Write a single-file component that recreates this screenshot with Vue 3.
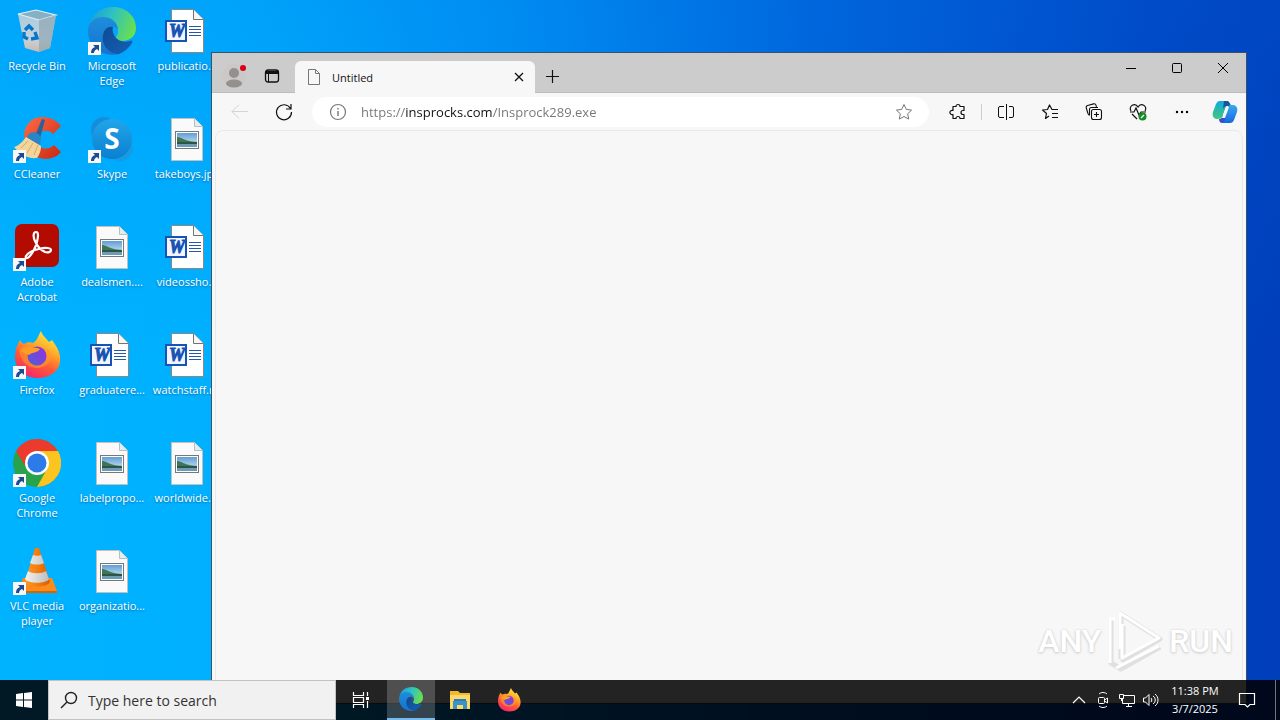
<script setup>
import { ref } from 'vue'

const word = { icon: 'word', glyph: 'W', glyphClass: 'glyph-word', gx: 14, gy: 30 }

const shortcuts = [
  { name: 'Recycle Bin', icon: 'bin' },
  { name: 'CCleaner', icon: 'ccleaner', link: true },
  { name: 'Adobe Acrobat', icon: 'acrobat', link: true },
  { name: 'Firefox', icon: 'firefox', link: true },
  { name: 'Google Chrome', icon: 'chrome', link: true },
  { name: 'VLC media player', icon: 'vlc', link: true },
  { name: 'Microsoft Edge', icon: 'edge', link: true },
  { name: 'Skype', icon: 'skype', link: true, glyph: 'S', glyphClass: 'glyph-skype', gx: 24, gy: 34 },
  { name: 'dealsmen....', icon: 'image' },
  { name: 'graduatere...', ...word },
  { name: 'labelpropo...', icon: 'image' },
  { name: 'organizatio...', icon: 'image' },
  { name: 'publicatio...', ...word },
  { name: 'takeboys.jpg', icon: 'image' },
  { name: 'videossho...', ...word },
  { name: 'watchstaff.rtf', ...word },
  { name: 'worldwide....', icon: 'image' }
]

const address = ref('https://insprocks.com/Insprock289.exe')
const query = ref('')
</script>

<template>
  <div class="screen">
    <svg class="sprites" aria-hidden="true">
      <defs>
        <linearGradient id="binFace" x1="0" y1="0" x2="0" y2="1">
          <stop offset="0" stop-color="#a5cbe0" /><stop offset=".7" stop-color="#c6d2da" /><stop offset="1" stop-color="#cdb9ac" />
        </linearGradient>
        <linearGradient id="edgeTop" x1="0" y1=".3" x2="1" y2=".6">
          <stop offset="0" stop-color="#1b9fd8" /><stop offset=".45" stop-color="#2fc3c0" /><stop offset="1" stop-color="#6be04a" />
        </linearGradient>
        <linearGradient id="edgeMid" x1="0" y1="0" x2="0" y2="1">
          <stop offset="0" stop-color="#1f8ddb" /><stop offset="1" stop-color="#1473cf" />
        </linearGradient>
        <linearGradient id="edgeLow" x1="0" y1="0" x2="1" y2="1">
          <stop offset="0" stop-color="#0f4a94" /><stop offset="1" stop-color="#1560b5" />
        </linearGradient>
        <linearGradient id="fire" x1=".8" y1="0" x2=".3" y2="1">
          <stop offset="0" stop-color="#fff14a" /><stop offset=".35" stop-color="#ffae28" /><stop offset=".65" stop-color="#ff5a36" /><stop offset="1" stop-color="#f5256c" />
        </linearGradient>
        <linearGradient id="globe" x1="0" y1="1" x2="1" y2="0">
          <stop offset="0" stop-color="#4a62d8" /><stop offset="1" stop-color="#9c2ce0" />
        </linearGradient>
        <linearGradient id="skypeBlue" x1="0" y1="0" x2="0" y2="1">
          <stop offset="0" stop-color="#20a6ea" /><stop offset="1" stop-color="#0b7fd0" />
        </linearGradient>
        <linearGradient id="cone" x1="0" y1="0" x2="1" y2="0">
          <stop offset="0" stop-color="#ff9a2a" /><stop offset=".5" stop-color="#f57c0c" /><stop offset="1" stop-color="#d95c00" />
        </linearGradient>
        <linearGradient id="stripe" x1="0" y1="0" x2="1" y2="0">
          <stop offset="0" stop-color="#f2f2f2" /><stop offset="1" stop-color="#bdbdbd" />
        </linearGradient>
        <linearGradient id="ccRed" x1="0" y1="0" x2="1" y2="1">
          <stop offset="0" stop-color="#ff6a45" /><stop offset="1" stop-color="#c92812" />
        </linearGradient>
        <linearGradient id="sky" x1="0" y1="0" x2="0" y2="1">
          <stop offset="0" stop-color="#5f9ed6" /><stop offset="1" stop-color="#e3f0f6" />
        </linearGradient>
        <linearGradient id="pilotA" x1="0" y1="0" x2="0" y2="1">
          <stop offset="0" stop-color="#12a9df" /><stop offset="1" stop-color="#43c878" />
        </linearGradient>
        <linearGradient id="pilotB" x1="0" y1="0" x2="0" y2="1">
          <stop offset="0" stop-color="#3aa8f2" /><stop offset="1" stop-color="#1668dd" />
        </linearGradient>
      </defs>

      <symbol id="bin" viewBox="0 0 48 48">
        <path d="M5 7 23 3l20 5-6 33-11 4-14-4z" fill="url(#binFace)" />
        <path d="m5 7 21 6 17-5-20-5z" fill="#86b0c6" stroke="#e4eff4" stroke-width="1.200" />
        <path d="m26 13 17-5-6 33-11 4z" fill="#8ea6b4" opacity=".7" />
        <g fill="none" stroke="#0877c9" stroke-width="3.400">
          <path d="m12 23 4-4 4 4" /><path d="m22 25 2 6-6 1" /><path d="m15 32-4-2 0-5" />
        </g>
      </symbol>

      <symbol id="edge" viewBox="0 0 48 48">
        <path d="M1 20C3 7 13 0 25 0c14 0 23 10 23 21 0 8-6 13-14 13-5 0-7-2-6-4 3-3 3-9-2-13C17 10 5 13 1 20z" fill="url(#edgeTop)" />
        <path d="M0 24c0-9 7-14 15-14 9 0 15 6 15 13-3-6-14-4-15 5-1 10 8 19 17 19C14 51 0 39 0 24z" fill="url(#edgeMid)" />
        <path d="M15 28c1-6 5-9 10-8-2 9 6 17 17 14 2-1 3 0 2 2-3 5-8 9-13 11-10 0-18-9-16-19z" fill="url(#edgeLow)" />
      </symbol>

      <symbol id="ccleaner" viewBox="0 0 48 48">
        <path d="m48 11-8 8c-5-6-15-3-16 5-1 9 10 13 17 6l7 7c-8 10-26 9-33-3C4 13 19-2 36 3c5 1 9 4 12 8z" fill="url(#ccRed)" />
        <path d="m29 4 3 1-5 18-5-2z" fill="#24649b" />
        <path d="M17 18c4-2 8 0 11 4l-1 8-14-7z" fill="#2a84c8" />
        <path d="m13 22 15 9c0 4-1 8-4 12C14 44 7 39 1 32c6-2 9-6 12-10z" fill="#f3d59c" />
        <path d="m15 26-7 7m12-5-6 10m11-8-4 10" stroke="#d2a968" fill="none" />
      </symbol>

      <symbol id="skype" viewBox="0 0 48 48">
        <circle cx="16" cy="15" r="13" fill="#158ddb" /><circle cx="32" cy="33" r="13" fill="#149ce5" />
        <circle cx="24" cy="24" r="20" fill="url(#skypeBlue)" />
      </symbol>

      <symbol id="acrobat" viewBox="0 0 48 48">
        <rect x="2" y="1" width="44" height="43" rx="7" fill="#b30b00" />
        <path d="M23 9c-3 0-3 5-1 9 2 5 6 9 10 11 3 1 6 0 6-2s-5-3-12-1c-6 1-11 4-13 7-1 2 1 3 3 1 3-3 7-10 8-15 1-5 2-10-1-10z" fill="none" stroke="#fff" stroke-width="2.200" stroke-linejoin="round" />
      </symbol>

      <symbol id="firefox" viewBox="0 0 48 48">
        <path d="M7 9c1 2 2 3 4 4 3-2 6-2 9-1 4-2 5-7 8-12 1 4 5 7 8 11l3-2c6 8 9 14 8 22-1 9-10 16-22 16C11 47 2 38 2 26c0-7 2-12 5-17z" fill="url(#fire)" />
        <path d="M6 19c5-5 13-4 18-2-1 4-8 4-9 7 0 5 8 5 13 4 7-1 7-8 4-12 10 6 7 20-7 21C14 37 8 31 6 19z" fill="#ff9b27" opacity=".6" />
        <circle cx="24" cy="25" r="9.500" fill="url(#globe)" />
        <path d="M8 20c5-5 14-4 19-2-2 4-8 3-11 6-3-1-6-3-8-4z" fill="#ff9e22" />
      </symbol>

      <symbol id="chrome" viewBox="0 0 48 48">
        <circle cx="24" cy="24" r="24" fill="#28a34b" />
        <path d="M24 0a24 24 0 0 0-21 12l11 18 10-17h21A24 24 0 0 0 24 0z" fill="#ec3a2e" />
        <path d="M24 12h21A24 24 0 0 1 24 48l10-18z" fill="#fcc41f" />
        <circle cx="24" cy="24" r="12" fill="#fff" /><circle cx="24" cy="24" r="9.500" fill="#2c7be8" />
      </symbol>

      <symbol id="vlc" viewBox="0 0 48 48">
        <path d="M10 31h29l5 13H5z" fill="#f98c1c" /><path d="M5 44h39v2H5z" fill="#d86300" />
        <path d="M22 1h4l11 34c-3 6-22 6-25 0z" fill="url(#cone)" />
        <path d="M20 8c2 1 6 1 8 0l3 8c-3 2-10 2-14 0zM15 24c4 3 14 3 18 0l3 8c-3 5-21 5-24 0z" fill="url(#stripe)" />
      </symbol>

      <symbol id="word" viewBox="0 0 48 48">
        <path d="M8.500 2.500h22l10 10v33h-32z" fill="#fff" stroke="#8b8884" />
        <path d="M30.500 2.500v10h10" fill="#f7f7f7" stroke="#77726e" />
        <path d="M26 19.500h12m-12 3h12m-12 3h12m-12 3h12" stroke="#2459a8" />
        <rect x="3" y="14" width="20" height="20" fill="#f1f5ff" stroke="#1753b2" stroke-width="2" />
      </symbol>

      <symbol id="image" viewBox="0 0 48 48">
        <path d="M8.500 3.500h23l8 8v34h-31z" fill="#fafafa" stroke="#c5c0bb" />
        <path d="M31.500 3.500v8h8" fill="#e2edf1" stroke="#b5bec2" />
        <rect x="12.500" y="16.500" width="23" height="17" fill="#fff" stroke="#777" />
        <path d="M14 18h20v14H14z" fill="url(#sky)" />
        <path d="M14 22c5 0 6 4 20 5v2H14z" fill="#3f7454" /><path d="M14 29h20v3H14z" fill="#6d9cb8" /><path d="M14 27h20v2H14z" fill="#2b5545" />
      </symbol>

      <symbol id="arrow" viewBox="0 0 13 13">
        <path d="M0 0h13v13H0z" fill="#f8f8f8" /><path d="M5 3h6v6L9 7c-2 1-3 2-3 4H3c0-3 1-5 4-6z" fill="#1c4b94" />
      </symbol>

      <symbol id="explorer" viewBox="0 0 24 24">
        <path d="M2 3h8l2 2h10v16H2z" fill="#f4b92e" /><path d="M2 7h20v14H2z" fill="#ffd968" />
        <path d="M5 13h14v8h-4v-4H9v4H5z" fill="#3d91c9" /><path d="M6 11h12v2H6z" fill="#277fb7" />
      </symbol>
    </svg>

    <nav class="desktop" aria-label="Desktop">
      <button v-for="item in shortcuts" :key="item.name" class="shortcut" type="button">
        <span class="picture">
          <svg class="big" viewBox="0 0 48 48" aria-hidden="true">
            <use :href="'#' + item.icon" />
            <text v-if="item.glyph" :class="item.glyphClass" :x="item.gx" :y="item.gy" text-anchor="middle">{{ item.glyph }}</text>
          </svg>
          <svg v-if="item.link" class="arrow" aria-hidden="true"><use href="#arrow" /></svg>
        </span>
        <span class="caption">{{ item.name }}</span>
      </button>
    </nav>

    <main class="window">
      <header class="tabs">
        <button class="profile" type="button" aria-label="Profile">
          <svg width="24" height="24" viewBox="0 0 24 24"><circle cx="12" cy="12" r="12" fill="#cac9c8" /><circle cx="12" cy="9" r="5" fill="#93908e" /><ellipse cx="12" cy="19.500" rx="8" ry="4" fill="#93908e" /></svg>
          <span class="dot"></span>
        </button>
        <button class="tabmenu" type="button" aria-label="Tab actions">
          <svg width="16" height="16" viewBox="0 0 16 16"><rect x="1.500" y="2" width="13" height="12" rx="2.500" fill="none" stroke="#111" stroke-width="1.300" /><path d="M2 3h12v3H2z" fill="#111" /><path d="M4.500 5v9" stroke="#111" /></svg>
        </button>
        <div class="tab">
          <svg width="16" height="18" viewBox="0 0 16 18" fill="none" stroke="#777"><path d="M2.500 1.500h7l4 4v11h-11zM9.500 1.500v4h4" /></svg>
          <span class="title">Untitled</span>
          <button type="button" class="shut" aria-label="Close tab"><svg width="10" height="10" viewBox="0 0 10 10"><path d="m1 1 8 8m0-8-8 8" stroke="#111" stroke-width="1.300" /></svg></button>
        </div>
        <button class="add" type="button" aria-label="New tab"><svg width="16" height="16" viewBox="0 0 16 16"><path d="M8.500 2v13M2 8.500h13" stroke="#111" stroke-width="1.200" /></svg></button>
        <div class="controls">
          <button type="button" aria-label="Minimize"><svg width="12" height="12" viewBox="0 0 12 12"><path d="M1 6.500h10" stroke="#000" /></svg></button>
          <button type="button" aria-label="Maximize"><svg width="12" height="12" viewBox="0 0 12 12"><rect x="1.500" y="1.500" width="9" height="9" rx="1" fill="none" stroke="#000" /></svg></button>
          <button type="button" aria-label="Close"><svg width="12" height="12" viewBox="0 0 12 12"><path d="m1 1 10 10m0-10L1 11" stroke="#000" /></svg></button>
        </div>
      </header>

      <div class="toolbar">
        <button type="button" aria-label="Back"><svg width="20" height="20" viewBox="0 0 20 20" fill="none" stroke="#d4d4d4"><path d="M18 9.500H2m7-7-7 7 7 7" /></svg></button>
        <button type="button" aria-label="Refresh"><svg width="20" height="20" viewBox="0 0 20 20" fill="none" stroke="#111" stroke-width="1.200"><path d="M16.500 6.500A7.500 7.500 0 1 0 17.500 10M17 2v5h-5" /></svg></button>
        <div class="address">
          <svg width="18" height="18" viewBox="0 0 18 18" fill="none" stroke="#777"><circle cx="9" cy="9" r="7.500" stroke-width="1.200" /><path d="M9 8v5M9 5v1.500" stroke-width="1.400" /></svg>
          <input v-model="address" class="url" type="text" aria-label="Address" spellcheck="false">
          <button type="button" class="star" aria-label="Add to favorites"><svg width="18" height="18" viewBox="0 0 18 18" fill="none" stroke="#777" stroke-linejoin="round"><path d="m9 1.500 2.300 4.900 5.300.7-3.900 3.700 1 5.300L9 13.500l-4.700 2.600 1-5.300-3.900-3.700 5.300-.7z" /></svg></button>
        </div>
        <div class="actions">
          <button type="button" aria-label="Extensions"><svg width="18" height="18" viewBox="0 0 18 18" fill="none" stroke="#111" stroke-width="1.200" stroke-linejoin="round"><path d="M4 3.500h3a2 2 0 0 1 4 0h4v4h-1a1.800 1.800 0 0 0 0 4h1v4h-4a2 2 0 0 0-4 0H4v-4a2.200 2.200 0 1 1 0-4z" /></svg></button>
          <span class="rule"></span>
          <button type="button" aria-label="Split screen"><svg width="18" height="18" viewBox="0 0 18 18" fill="none" stroke="#111"><path d="M9.500 1v16M7 3.500H3A1.500 1.500 0 0 0 1.500 5v8A1.500 1.500 0 0 0 3 14.500h4M12 3.500h3A1.500 1.500 0 0 1 16.500 5v8a1.500 1.500 0 0 1-1.500 1.500h-3" /></svg></button>
          <button type="button" aria-label="Favorites"><svg width="18" height="18" viewBox="0 0 18 18" fill="none" stroke="#111" stroke-width="1.200" stroke-linejoin="round"><path d="M15 6.500h-4L8.500 2 6.500 6.500l-5 .5 4 3.500-1 5L8 13M11 6.500h6m-6 4h6m-6 4h6" /></svg></button>
          <button type="button" aria-label="Collections"><svg width="18" height="18" viewBox="0 0 18 18" fill="none" stroke="#111" stroke-width="1.100"><rect x="6.500" y="6.500" width="10" height="10" rx="2" /><path d="M11.500 9v5M9 11.500h5M4.500 12.500C3.500 12 3 11 2.800 10L1.300 5a2 2 0 0 1 1.300-2.500l6-1.600A2 2 0 0 1 11 2.200l.5 2.300" /><path d="M4.500 12V6.500a2 2 0 0 1 2-2H13" /></svg></button>
          <button type="button" aria-label="Browser essentials"><svg width="18" height="18" viewBox="0 0 18 18" fill="none" stroke="#111" stroke-width="1.200"><path d="M2 8C-1 3 6-1 9 4c3-5 10-1 7 4M1 9h4l2-4 3 7 2-3h5M3 11l5 5" /><circle cx="13.500" cy="13.500" r="4" fill="#168a24" stroke="none" /><path d="m12 15 3-3" stroke="#fff" /></svg></button>
          <button type="button" aria-label="Settings and more"><svg width="18" height="18" viewBox="0 0 18 18"><circle cx="4" cy="9" r="1.200" /><circle cx="9" cy="9" r="1.200" /><circle cx="14" cy="9" r="1.200" /></svg></button>
          <button type="button" aria-label="Copilot"><svg width="26" height="26" viewBox="0 0 26 26"><path d="M8 2h8l-5 14c-1 3-3 4-6 4-4 0-5-4-4-7l3-8c1-2 2-3 4-3z" fill="url(#pilotA)" /><path d="M12 2h3c2 0 3 2 4 5h-4c-2 0-3 1-4 3z" fill="#17569c" /><path d="M18 6h3c4 0 5 4 4 7l-3 8c-1 2-2 3-4 3h-8l5-14c1-3 2-4 3-4z" fill="url(#pilotB)" /><path d="M7 20c2 0 3-1 4-4h3l-1 5c-1 2-2 3-3 3-2 0-3-2-3-4z" fill="#3153cf" /><path d="M14 8h3l-4 11h-3z" fill="#f7f9fb" /></svg></button>
        </div>
      </div>
      <section class="page" aria-label="Page"></section>
    </main>

    <div class="watermark">
      <span>ANY</span>
      <svg width="60" height="64" viewBox="0 0 60 64" fill="none" stroke-linejoin="round"><g stroke="#e0e0e0" stroke-width="5"><path d="M18 17v34l37-21-39-25v45M6 10v44l10 6 39-22" /></g><g stroke="#fff" stroke-width="3"><path d="M17 15v34l37-20-39-25v36M5 54V10h5M11 59l43-22" /></g></svg>
      <span>RUN</span>
    </div>

    <footer class="taskbar">
      <button type="button" class="start" aria-label="Start"><svg width="16" height="16" viewBox="0 0 16 16" fill="#fff"><path d="m0 2 7-1v6.500H0zM8 1l8-1v7.500H8zM0 8.500h7V15l-7-1zM8 8.500h8V16l-8-1z" /></svg></button>
      <label class="search">
        <svg width="18" height="18" viewBox="0 0 18 18" fill="none" stroke="#222" stroke-width="1.400"><circle cx="11" cy="7" r="5.500" /><path d="m7 11-6 6" /></svg>
        <input v-model="query" type="text" placeholder="Type here to search" aria-label="Search">
      </label>
      <button type="button" class="task" aria-label="Task view"><svg width="18" height="18" viewBox="0 0 18 18" fill="none" stroke="#fff" stroke-width="1.200"><path d="M1.500 1v3.500h10V1M1.500 17v-3.500h10V17M1.500 6.500h10v5h-10zM15.500 1v4m0 5v7" /><path d="M14 6h3v3h-3z" fill="#fff" stroke="none" /></svg></button>
      <button type="button" class="task active" aria-label="Microsoft Edge"><svg width="24" height="24"><use href="#edge" /></svg></button>
      <button type="button" class="task" aria-label="File Explorer"><svg width="24" height="24"><use href="#explorer" /></svg></button>
      <button type="button" class="task" aria-label="Firefox"><svg width="24" height="24"><use href="#firefox" /></svg></button>
      <div class="tray">
        <button type="button" aria-label="Show hidden icons"><svg width="18" height="18" viewBox="0 0 18 18" fill="none" stroke="#fff" stroke-width="1.200"><path d="m3 12 6-6 6 6" /></svg></button>
        <button type="button" aria-label="Meet now"><svg width="18" height="18" viewBox="0 0 18 18" fill="none" stroke="#fff"><rect x="4.500" y="6.500" width="6" height="6" rx="1" /><path d="m10.500 9 3-2v5l-3-2M5 3c2-2 6-2 8 0M5 15c2 2 6 2 8 0" /></svg></button>
        <button type="button" aria-label="Network"><svg width="18" height="18" viewBox="0 0 18 18" fill="none" stroke="#fff"><path d="M6 4.500h10.500v8h-12V8M8 15.500h6M10.500 12.500v3M1.500 3.500h4v4h-4zM3.500 7.500V10" /></svg></button>
        <button type="button" aria-label="Volume"><svg width="18" height="18" viewBox="0 0 18 18" fill="none" stroke="#fff"><path d="M1.500 7h2L7 3.500v11L3.500 11h-2zM9 7c1 1 1 3 0 4m2-6c3 2 3 6 0 8m2-10c4 3 4 9 0 12" /></svg></button>
        <button type="button" class="clock"><span>11:38 PM</span><span>3/7/2025</span></button>
        <button type="button" class="notes" aria-label="Notifications"><svg width="18" height="18" viewBox="0 0 18 18" fill="none" stroke="#fff" stroke-width="1.200"><path d="M1.500 2.500h15v11H12L9.500 16 7 13.500H1.500z" /></svg></button>
        <button type="button" class="peek" aria-label="Show desktop"></button>
      </div>
    </footer>
  </div>
</template>

<style>
html, body { margin: 0; height: 100%; overflow: hidden; }
</style>

<style scoped>
.screen {
  position: relative;
  height: 100vh;
  overflow: hidden;
  font-family: "Open Sans", "Noto Sans", sans-serif;
  font-size: 11px;
  background:
    linear-gradient(180deg, rgba(0, 110, 230, .18), rgba(0, 110, 230, 0) 50%),
    linear-gradient(90deg, #00b3ff 0%, #00b0ff 18%, #0092f4 40%, #0064da 64%, #0044c2 90%, #003eba 100%);
}
.sprites { position: absolute; width: 0; height: 0; }
button { margin: 0; padding: 0; border: 0; background: none; color: inherit; font: inherit; display: flex; align-items: center; justify-content: center; }
svg { display: block; flex: none; }
input { border: 0; outline: 0; background: none; padding: 0; margin: 0; font-family: inherit; min-width: 0; }

.desktop {
  display: grid;
  grid-auto-flow: column;
  grid-template-rows: repeat(6, 108px);
  grid-template-columns: 74px 76px 74px;
  padding-top: 7px;
}
.shortcut { flex-direction: column; justify-content: flex-start; gap: 3px; color: #fff; }
.picture { position: relative; }
.big { width: 48px; height: 48px; }
.glyph-skype { font: 700 28px "Open Sans", sans-serif; fill: #fff; }
.glyph-word { font: italic 700 18px "Liberation Serif", serif; fill: #1753b2; stroke: #1753b2; }
.arrow { position: absolute; left: 0; bottom: 0; width: 13px; height: 13px; }
.caption { line-height: 15px; max-width: 72px; text-align: center; text-shadow: 0 1px 2px rgba(0, 50, 100, .55); }

.window {
  position: absolute;
  left: 211px;
  top: 52px;
  right: 33px;
  bottom: 16px;
  display: flex;
  flex-direction: column;
  border: 1px solid #35536c;
  background: #f7f7f7;
  color: #111;
}
.tabs { display: flex; align-items: flex-end; height: 40px; box-sizing: border-box; background: #ccc; border-bottom: 1px solid #bcbcbc; }
.profile { position: relative; width: 44px; height: 32px; }
.dot { position: absolute; right: 10px; top: 5px; width: 6px; height: 6px; border-radius: 50%; background: #d70012; }
.tabmenu { width: 32px; height: 32px; }
.tab { display: flex; align-items: center; gap: 10px; box-sizing: border-box; width: 240px; height: 32px; margin: 0 0 -1px 7px; padding: 0 10px 0 11px; border-radius: 6px 6px 0 0; background: #f7f7f7; }
.title { flex: 1; }
.shut { width: 12px; height: 20px; }
.add { width: 34px; height: 32px; }
.controls { display: flex; align-self: flex-start; margin-left: auto; }
.controls button { width: 46px; height: 30px; }

.toolbar { display: flex; align-items: center; height: 37px; }
.toolbar > button { width: 44px; height: 32px; margin-left: 6px; }
.toolbar > button + button { margin-left: 0; }
.address { flex: 1; display: flex; align-items: center; height: 30px; margin-left: 6px; padding: 0 16px 0 17px; border-radius: 15px; background: #fff; }
.url {
  flex: 1;
  height: 24px;
  margin-left: 14px;
  font-size: 13px;
  background: linear-gradient(90deg, #757575 45px, #111 45px 132px, #757575 132px);
  -webkit-background-clip: text;
  background-clip: text;
  color: transparent;
}
.actions { display: flex; align-items: center; padding-left: 7px; }
.actions button { width: 44px; height: 32px; }
.actions button:last-child { width: 42px; }
.rule { width: 1px; height: 16px; margin: 0 2px 0 1px; background: #ccc; }
.page { flex: 1; margin: 0 3px; border: 1px solid #e9e9e9; border-radius: 8px 8px 0 0; }

.watermark {
  position: absolute;
  right: 47px;
  bottom: 47px;
  display: flex;
  align-items: center;
  gap: 4px;
  font: 500 32px/44px Roboto, "Open Sans", sans-serif;
  color: #fff;
  text-shadow: 0 1px 3px #ccc, 0 0 2px #d4d4d4;
}

.taskbar { position: absolute; left: 0; right: 0; bottom: 0; display: flex; height: 40px; background: rgba(0, 0, 0, .86); color: #fff; }
.start { width: 48px; }
.search { display: flex; align-items: center; gap: 10px; box-sizing: border-box; width: 288px; padding: 0 11px; border: 1px solid #c2c2c2; background: #f1f1f1; }
.search input { flex: 1; font-size: 14px; color: #222; }
.search input::placeholder { color: #333; opacity: 1; }
.task { width: 48px; margin-left: 1px; }
.search + .task { margin-left: 0; width: 50px; }
.active { background: rgba(255, 255, 255, .2); border-bottom: 2px solid #76b9ed; }
.tray { display: flex; margin-left: auto; }
.tray button { width: 24px; }
.tray .clock { flex-direction: column; width: 48px; margin-left: 8px; line-height: 18px; white-space: nowrap; }
.tray .notes { width: 56px; }
.tray .peek { width: 5px; border-left: 1px solid #6e7583; }
</style>
